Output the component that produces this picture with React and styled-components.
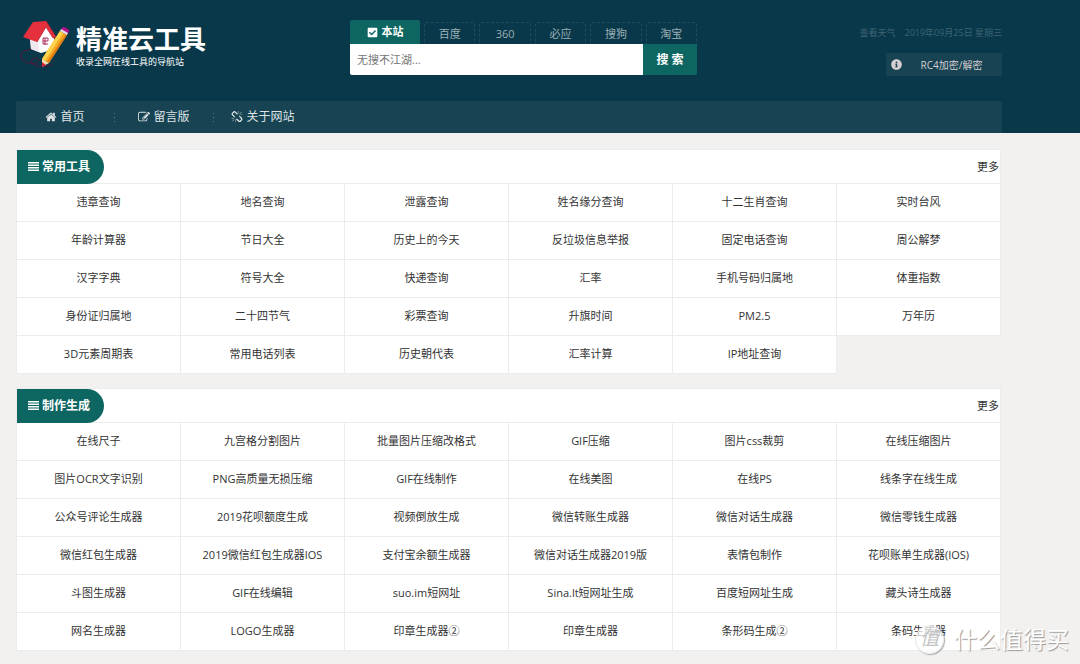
import React, { useState } from "react";
import styled, { createGlobalStyle } from "styled-components";
import { FaCheckSquare, FaInfoCircle } from "react-icons/fa";

const GlobalStyle = createGlobalStyle`
  * {
    box-sizing: border-box;
  }

  body {
    margin: 0;
    background: #f2f1ef;
    color: #333;
    font: 11px/16px "Open Sans", "Noto Sans CJK SC", sans-serif;
  }

  a {
    color: inherit;
    text-decoration: none;
  }

  button, input {
    font: inherit;
    border: none;
    margin: 0;
  }

  ul {
    list-style: none;
    margin: 0;
    padding: 0;
  }
`;

const Page = styled.div`
  position: relative;
  overflow: hidden;
`;

const Header = styled.header`
  background: #083849;
  padding: 20px 78px 0 16px;
`;

const Top = styled.div`
  display: grid;
  grid-template-columns: 334px minmax(300px, 347px) 1fr;
  height: 81px;
`;

const Brand = styled.a`
  display: flex;
  align-items: flex-start;
  padding-left: 2px;
  gap: 4px;
  color: #fff;
`;

const BrandText = styled.div`
  padding-top: 3px;
`;

const SiteName = styled.h1`
  margin: 0;
  font-size: 26px;
  line-height: 32px;
  font-weight: 700;
`;

const Slogan = styled.p`
  margin: 0;
  font-size: 9px;
  line-height: 14px;
`;

const Tabs = styled.div`
  display: flex;
  align-items: flex-end;
  gap: 4px;
  height: 24px;
`;

const Tab = styled.button`
  flex: ${p => (p.$active ? "0 0 70px" : "1")};
  display: flex;
  align-items: center;
  justify-content: center;
  gap: 4px;
  height: ${p => (p.$active ? 24 : 22)}px;
  padding: 0;
  cursor: pointer;
  border-radius: 2px 2px 0 0;
  border: ${p => (p.$active ? "none" : "1px dashed #1f4c5c")};
  border-bottom: none;
  background: ${p => (p.$active ? "#0e6663" : "transparent")};
  color: ${p => (p.$active ? "#fff" : "#9cafb6")};
  font-weight: ${p => (p.$active ? 700 : 400)};
`;

const SearchForm = styled.form`
  display: flex;
  height: 31px;
`;

const SearchInput = styled.input`
  flex: 1;
  min-width: 0;
  padding: 0 7px;
  background: #fff;
  border-radius: 0 0 0 2px;
  outline: none;

  &::placeholder {
    color: #757575;
    opacity: 1;
  }
`;

const SearchButton = styled.button`
  width: 54px;
  padding: 0;
  background: #0e6663;
  color: #fff;
  font-size: 12px;
  font-weight: 700;
  border-radius: 0 0 2px 0;
  cursor: pointer;
`;

const Side = styled.div`
  display: flex;
  flex-direction: column;
  align-items: flex-end;
  padding-top: 5px;
  gap: 12px;
`;

const DateLine = styled.div`
  display: flex;
  gap: 9px;
  color: #3f6473;
  font-size: 9px;
`;

const Notice = styled.a`
  display: flex;
  align-items: center;
  width: 116px;
  height: 23px;
  padding: 0 5px;
  background: #174353;
  color: #d6cfd2;
  font-size: 10px;

  span {
    flex: 1;
    text-align: center;
    padding-left: 4px;
  }
`;

const Nav = styled.nav`
  display: flex;
  align-items: center;
  height: 32px;
  background: #174353;
  border-radius: 2px 2px 0 0;
  color: #dfe4e6;
  font-size: 12px;
`;

const NavLink = styled.a`
  display: flex;
  align-items: center;
  justify-content: center;
  gap: 3px;
  width: 98px;
`;

const Dots = styled.i`
  width: 1px;
  height: 9px;
  background: repeating-linear-gradient(#5b7886 0 1px, transparent 1px 4px);
`;

const Main = styled.main`
  display: flex;
  flex-direction: column;
  gap: 14px;
  padding: 16px 79px 14px 16px;
`;

const SectionHead = styled.div`
  display: flex;
  align-items: center;
  justify-content: space-between;
  height: 35px;
  padding-right: 1px;
  background: #fff;
  border: 1px solid #ececec;
`;

const SectionTitle = styled.h2`
  display: flex;
  align-items: center;
  gap: 3px;
  width: 87px;
  height: 34px;
  margin: 0;
  padding-left: 11px;
  background: #0e6663;
  border-radius: 0 17px 17px 0;
  color: #fff;
  font-size: 12px;
`;

const Grid = styled.ul`
  display: grid;
  grid-template-columns: repeat(6, 1fr);
  border-left: 1px solid #ececec;
`;

const Cell = styled.li`
  background: #fff;
  border-right: 1px solid #ececec;
  border-bottom: 1px solid #ececec;

  a {
    display: block;
    height: 37px;
    line-height: 36px;
    text-align: center;
    white-space: nowrap;
  }
`;

const Watermark = styled.div`
  position: absolute;
  right: 11px;
  bottom: 10px;
  display: flex;
  align-items: center;
  gap: 10px;
  color: #fff;
  font-size: 23px;
  line-height: 32px;
  text-shadow: 1px 1px 1px #999;
  pointer-events: none;
`;

const WatermarkBadge = styled.span`
  width: 29px;
  height: 29px;
  border: 1px solid #e6e6e6;
  border-radius: 50%;
  background: rgba(255, 255, 255, 0.7);
  box-shadow: 1px 1px 1px #aaa;
  color: #c4c4c4;
  font-size: 19px;
  font-style: italic;
  line-height: 25px;
  text-align: center;
  text-shadow: none;
`;

const engines = ["本站", "百度", "360", "必应", "搜狗", "淘宝"];

const sections = [
  {
    title: "常用工具",
    items: [
      "违章查询", "地名查询", "泄露查询", "姓名缘分查询", "十二生肖查询", "实时台风",
      "年龄计算器", "节日大全", "历史上的今天", "反垃圾信息举报", "固定电话查询", "周公解梦",
      "汉字字典", "符号大全", "快递查询", "汇率", "手机号码归属地", "体重指数",
      "身份证归属地", "二十四节气", "彩票查询", "升旗时间", "PM2.5", "万年历",
      "3D元素周期表", "常用电话列表", "历史朝代表", "汇率计算", "IP地址查询"
    ]
  },
  {
    title: "制作生成",
    items: [
      "在线尺子", "九宫格分割图片", "批量图片压缩改格式", "GIF压缩", "图片css裁剪", "在线压缩图片",
      "图片OCR文字识别", "PNG高质量无损压缩", "GIF在线制作", "在线美图", "在线PS", "线条字在线生成",
      "公众号评论生成器", "2019花呗额度生成", "视频倒放生成", "微信转账生成器", "微信对话生成器", "微信零钱生成器",
      "微信红包生成器", "2019微信红包生成器IOS", "支付宝余额生成器", "微信对话生成器2019版", "表情包制作", "花呗账单生成器(IOS)",
      "斗图生成器", "GIF在线编辑", "suo.im短网址", "Sina.lt短网址生成", "百度短网址生成", "藏头诗生成器",
      "网名生成器", "LOGO生成器", "印章生成器②", "印章生成器", "条形码生成②", "条码生成器"
    ]
  }
];

const icons = {
  home:
    "M1472 992v480q0 26-19 45t-45 19h-384v-384h-256v384h-384q-26 0-45-19t-19-45v-480q0-1 .5-3t.5-3l575-474 575 474q1 2 1 6zm223-69l-62 74q-8 9-21 11h-3q-13 0-21-7l-692-577-692 577q-12 8-24 7-13-2-21-11l-62-74q-8-10-7-23.5t11-21.5l719-599q32-26 76-26t76 26l244 204v-195q0-14 9-23t23-9h192q14 0 23 9t9 23v408l219 182q10 8 11 21.5t-7 23.5z",
  edit:
    "M888 1184l116-116-152-152-116 116v56h96v96h56zm440-720q-16-16-33 1l-350 350q-17 17-1 33t33-1l350-350q17-17 1-33zm80 594v190q0 119-84.5 203.5t-203.5 84.5h-832q-119 0-203.5-84.5t-84.5-203.5v-832q0-119 84.5-203.5t203.5-84.5h832q63 0 117 25 15 7 18 23 3 17-9 29l-49 49q-14 14-32 8-23-6-45-6h-832q-66 0-113 47t-47 113v832q0 66 47 113t113 47h832q66 0 113-47t47-113v-126q0-13 9-22l64-64q15-15 35-7t20 29zm-96-738l288 288-672 672h-288v-288zm444 132l-92 92-288-288 92-92q28-28 68-28t68 28l152 152q28 28 28 68t-28 68z",
  unlink:
    "M503 1271l-256 256q-10 9-23 9-12 0-23-9-9-10-9-23t9-23l256-256q10-9 23-9t23 9q9 10 9 23t-9 23zm169 41v320q0 14-9 23t-23 9-23-9-9-23v-320q0-14 9-23t23-9 23 9 9 23zm-224-224q0 14-9 23t-23 9h-320q-14 0-23-9t-9-23 9-23 23-9h320q14 0 23 9t9 23zm1264 128q0 120-85 203l-147 146q-83 83-203 83-121 0-204-85l-334-335q-21-21-42-56l239-18 273 274q27 27 68 27.5t68-26.5l147-146q28-28 28-67 0-40-28-68l-274-275 18-239q35 21 56 42l336 336q84 86 84 204zm-617-724l-239 18-273-274q-28-28-68-28-39 0-68 27l-147 146q-28 28-28 67 0 40 28 68l274 274-18 240q-35-21-56-42l-336-336q-84-86-84-204 0-120 85-203l147-146q83-83 203-83 121 0 204 85l334 335q21 21 42 56zm633 84q0 14-9 23t-23 9h-320q-14 0-23-9t-9-23 9-23 23-9h320q14 0 23 9t9 23zm-544-544v320q0 14-9 23t-23 9-23-9-9-23v-320q0-14 9-23t23-9 23 9 9 23zm407 151l-256 256q-11 9-23 9t-23-9q-9-10-9-23t9-23l256-256q10-9 23-9t23 9q9 10 9 23t-9 23z"
};

const navItems = [
  { label: "首页", icon: "home" },
  { label: "留言版", icon: "edit" },
  { label: "关于网站", icon: "unlink" }
];

function Icon({ name }) {
  return (
    <svg width="12" height="12" viewBox="0 0 1792 1792" fill="currentColor" aria-hidden="true">
      <path d={icons[name]} />
    </svg>
  );
}

function ListIcon() {
  return (
    <svg width="11" height="9" viewBox="0 0 11 9" fill="currentColor" aria-hidden="true">
      <path d="M0 0h11v1.5H0zM0 2.5h11v1.5H0zM0 5h11v1.5H0zM0 7.5h11v1.5H0z" />
    </svg>
  );
}

function HouseLogo() {
  return (
    <svg width="54" height="50" viewBox="0 4 54 50" aria-hidden="true">
      <path
        d="M18 34C9 32 2 36 3 41C4 46 11 48 17 47C22 46 22 42 18 42C13 42 12 46 15 48C20 51 30 51 35 48"
        fill="none"
        stroke="#641336"
        strokeWidth="0.8"
      />
      <path d="M12 21L20 22L28 10L36 20L37 33L23 37L13 33Z" fill="#fff" />
      <path d="M12 23L20 26L21 36L13 33Z" fill="#eee7ee" />
      <path d="M15 6L28 5L38 21L35 22L28 11L19 26L5 21Z" fill="#e5303d" />
      <path d="M28 5L38 21L35 22L28 11L19 26" fill="none" stroke="#b81f3a" strokeWidth="0.8" />
      <path d="M25 22H30V25H25ZM27 22V29M25 25V28H30" fill="none" stroke="#a51c50" strokeWidth="0.9" />
      <path d="M42 15L49 19L31 47L24 43Z" fill="#f6a821" />
      <path d="M42 15L45 17L27 45L24 43Z" fill="#ffd34d" />
      <path d="M48 18L49 19L31 47L29 46Z" fill="#d97816" />
      <path d="M44 12Q45 10 48 12L51 14Q52 15 50 17L49 18L43 14Z" fill="#b3128c" />
      <path d="M43 13L50 17L49 19L42 15Z" fill="#e3dce8" />
      <path d="M24 43L31 47L24 51Z" fill="#f8dcb2" />
      <path d="M24 46L28 49L24 51Z" fill="#d9203a" />
    </svg>
  );
}

function Search() {
  const [engine, setEngine] = useState(engines[0]);
  const [text, setText] = useState("");

  return (
    <div>
      <Tabs>
        {engines.map(name => (
          <Tab
            key={name}
            type="button"
            $active={name === engine}
            onClick={() => setEngine(name)}
          >
            {name === engine && <FaCheckSquare size={11} />}
            {name}
          </Tab>
        ))}
      </Tabs>
      <SearchForm onSubmit={e => e.preventDefault()}>
        <SearchInput
          aria-label="搜索"
          placeholder="无搜不江湖..."
          value={text}
          onChange={e => setText(e.target.value)}
        />
        <SearchButton type="submit">搜 索</SearchButton>
      </SearchForm>
    </div>
  );
}

function Section({ title, items }) {
  return (
    <section>
      <SectionHead>
        <SectionTitle>
          <ListIcon />
          {title}
        </SectionTitle>
        <a href="#more">更多</a>
      </SectionHead>
      <Grid>
        {items.map(item => (
          <Cell key={item}>
            <a href="#tool">{item}</a>
          </Cell>
        ))}
      </Grid>
    </section>
  );
}

function App() {
  return (
    <Page>
      <GlobalStyle />
      <Header>
        <Top>
          <Brand href="#home">
            <HouseLogo />
            <BrandText>
              <SiteName>精准云工具</SiteName>
              <Slogan>收录全网在线工具的导航站</Slogan>
            </BrandText>
          </Brand>
          <Search />
          <Side>
            <DateLine>
              <a href="#weather">查看天气</a>
              <span>2019年09月25日 星期三</span>
            </DateLine>
            <Notice href="#rc4">
              <FaInfoCircle size={11} />
              <span>RC4加密/解密</span>
            </Notice>
          </Side>
        </Top>
        <Nav>
          {navItems.map((item, i) => (
            <React.Fragment key={item.label}>
              {i > 0 && <Dots />}
              <NavLink href={"#" + item.icon}>
                <Icon name={item.icon} />
                {item.label}
              </NavLink>
            </React.Fragment>
          ))}
        </Nav>
      </Header>
      <Main>
        {sections.map(section => (
          <Section key={section.title} {...section} />
        ))}
      </Main>
      <Watermark>
        <WatermarkBadge>值</WatermarkBadge>
        什么值得买
      </Watermark>
    </Page>
  );
}

export default App;
